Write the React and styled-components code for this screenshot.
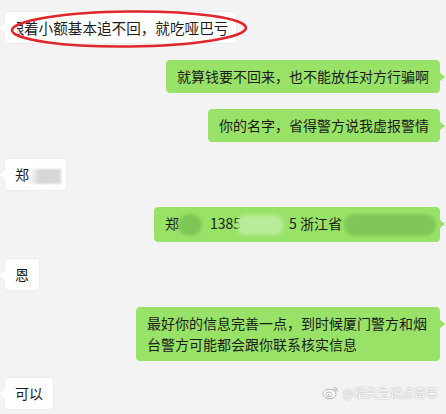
import React from 'react';
import styled, { createGlobalStyle } from 'styled-components';

const GlobalStyle = createGlobalStyle`
  html, body {
    margin: 0;
    padding: 0;
    background: #f3f3f3;
  }
  body {
    font-family: "Noto Sans CJK SC", "Noto Sans", sans-serif;
  }
`;

const Screen = styled.div`
  position: relative;
  width: 446px;
  height: 414px;
  overflow: hidden;
  background: #f3f3f3;
`;

const Chat = styled.div`
  display: flex;
  flex-direction: column;
  gap: 16px;
  padding: 11px 6px 0 4px;
`;

const Row = styled.div`
  display: flex;
  justify-content: ${(p) => (p.$mine ? 'flex-end' : 'flex-start')};
`;

const Bubble = styled.div`
  position: relative;
  box-sizing: border-box;
  max-width: ${(p) => (p.$wide ? '304px' : 'none')};
  padding: ${(p) => (p.$pad ? p.$pad : '5px 10px')};
  font-size: ${(p) => p.$size || 14}px;
  line-height: 21px;
  color: #1b1b1b;
  border-radius: 4px;
  background: ${(p) => (p.$mine ? '#98e267' : '#ffffff')};
  border: 1px solid ${(p) => (p.$mine ? '#98e267' : '#ececec')};
  white-space: ${(p) => (p.$wide ? 'normal' : 'nowrap')};

  &::before {
    content: '';
    position: absolute;
    top: 11px;
    ${(p) => (p.$mine ? 'right: -6px;' : 'left: -5px;')}
    border-top: 5px solid transparent;
    border-bottom: 5px solid transparent;
    ${(p) =>
      p.$mine
        ? 'border-left: 6px solid #98e267;'
        : 'border-right: 5px solid #ffffff;'}
  }
`;

const CutChar = styled.span`
  display: inline-block;
  width: 7px;
  overflow: hidden;
  vertical-align: top;

  span {
    display: inline-block;
    margin-left: -7px;
  }
`;

const Blur = styled.span`
  display: inline-block;
  vertical-align: middle;
  width: ${(p) => p.$w}px;
  height: ${(p) => p.$h || 18}px;
  margin: ${(p) => p.$m || '0'};
  background: ${(p) => p.$bg};
  border-radius: ${(p) => p.$r || '0'};
  filter: blur(${(p) => p.$blur || 1.5}px);
`;

const Ring = styled.svg`
  position: absolute;
  left: 8px;
  top: 6px;
  pointer-events: none;
`;

const Watermark = styled.div`
  position: absolute;
  right: 8px;
  bottom: 13px;
  display: flex;
  align-items: center;
  gap: 4px;
  font-size: 12px;
  color: #ffffff;
  text-shadow: 0 0 1px #9a9a9a, 0 0 2px #b5b5b5;
  opacity: 0.85;
`;

function WeiboLogo() {
  return (
    <svg width="17" height="15" viewBox="0 0 17 15">
      <ellipse cx="7.5" cy="9" rx="6.5" ry="4.8" fill="#fff" stroke="#a8a8a8" strokeWidth="1" />
      <ellipse cx="7" cy="9.5" rx="3.2" ry="2.4" fill="none" stroke="#a8a8a8" strokeWidth="0.9" />
      <circle cx="6.6" cy="9.8" r="0.9" fill="#a8a8a8" />
      <path d="M11.5 2.5 A4 4 0 0 1 15.5 6.5" fill="none" stroke="#a8a8a8" strokeWidth="1" />
      <path d="M11.5 4.3 A2.2 2.2 0 0 1 13.7 6.5" fill="none" stroke="#a8a8a8" strokeWidth="1" />
    </svg>
  );
}

export default function App() {
  return (
    <Screen>
      <GlobalStyle />
      <Chat>
        <Row>
          <Bubble $size={14.6} $pad="5px 8px 5px 12px">
            <CutChar><span>恨</span></CutChar>着小额基本追不回，就吃哑巴亏
          </Bubble>
        </Row>
        <Row $mine>
          <Bubble $mine>就算钱要不回来，也不能放任对方行骗啊</Bubble>
        </Row>
        <Row $mine>
          <Bubble $mine>你的名字，省得警方说我虚报警情</Bubble>
        </Row>
        <Row>
          <Bubble $pad="5px 5px 5px 10px">
            郑<Blur $w={33} $h={15} $m="0 0 0 -1px" $bg="linear-gradient(90deg, rgba(214,214,214,0) 0%, #d6d6d6 35%, #d8d8d8 100%)" $blur={0.8} />
          </Bubble>
        </Row>
        <Row $mine>
          <Bubble $mine $pad="5px 3px 5px 10px">
            郑<Blur $w={24} $h={22} $m="0 8px 0 -1px" $bg="#7ec757" $r="50%" $blur={1.5} />1385
            <Blur $w={46} $h={20} $m="0 6px 0 -4px" $bg="#b9ed9a" $r="8px" $blur={2} />5 浙江省
            <Blur $w={92} $h={22} $m="0 0 0 2px" $bg="#80c759" $r="11px" $blur={1.8} />
          </Bubble>
        </Row>
        <Row>
          <Bubble>恩</Bubble>
        </Row>
        <Row $mine>
          <Bubble $mine $wide>
            最好你的信息完善一点，到时候厦门警方和烟台警方可能都会跟你联系核实信息
          </Bubble>
        </Row>
        <Row>
          <Bubble>可以</Bubble>
        </Row>
      </Chat>
      <Ring width="242" height="46" viewBox="0 0 242 46">
        <ellipse cx="121" cy="23" rx="117" ry="17.5" fill="none" stroke="#e0262d" strokeWidth="2.6" transform="rotate(-0.6 121 23)" />
      </Ring>
      <Watermark>
        <WeiboLogo />
        <span>@福先生说点奇事</span>
      </Watermark>
    </Screen>
  );
}
